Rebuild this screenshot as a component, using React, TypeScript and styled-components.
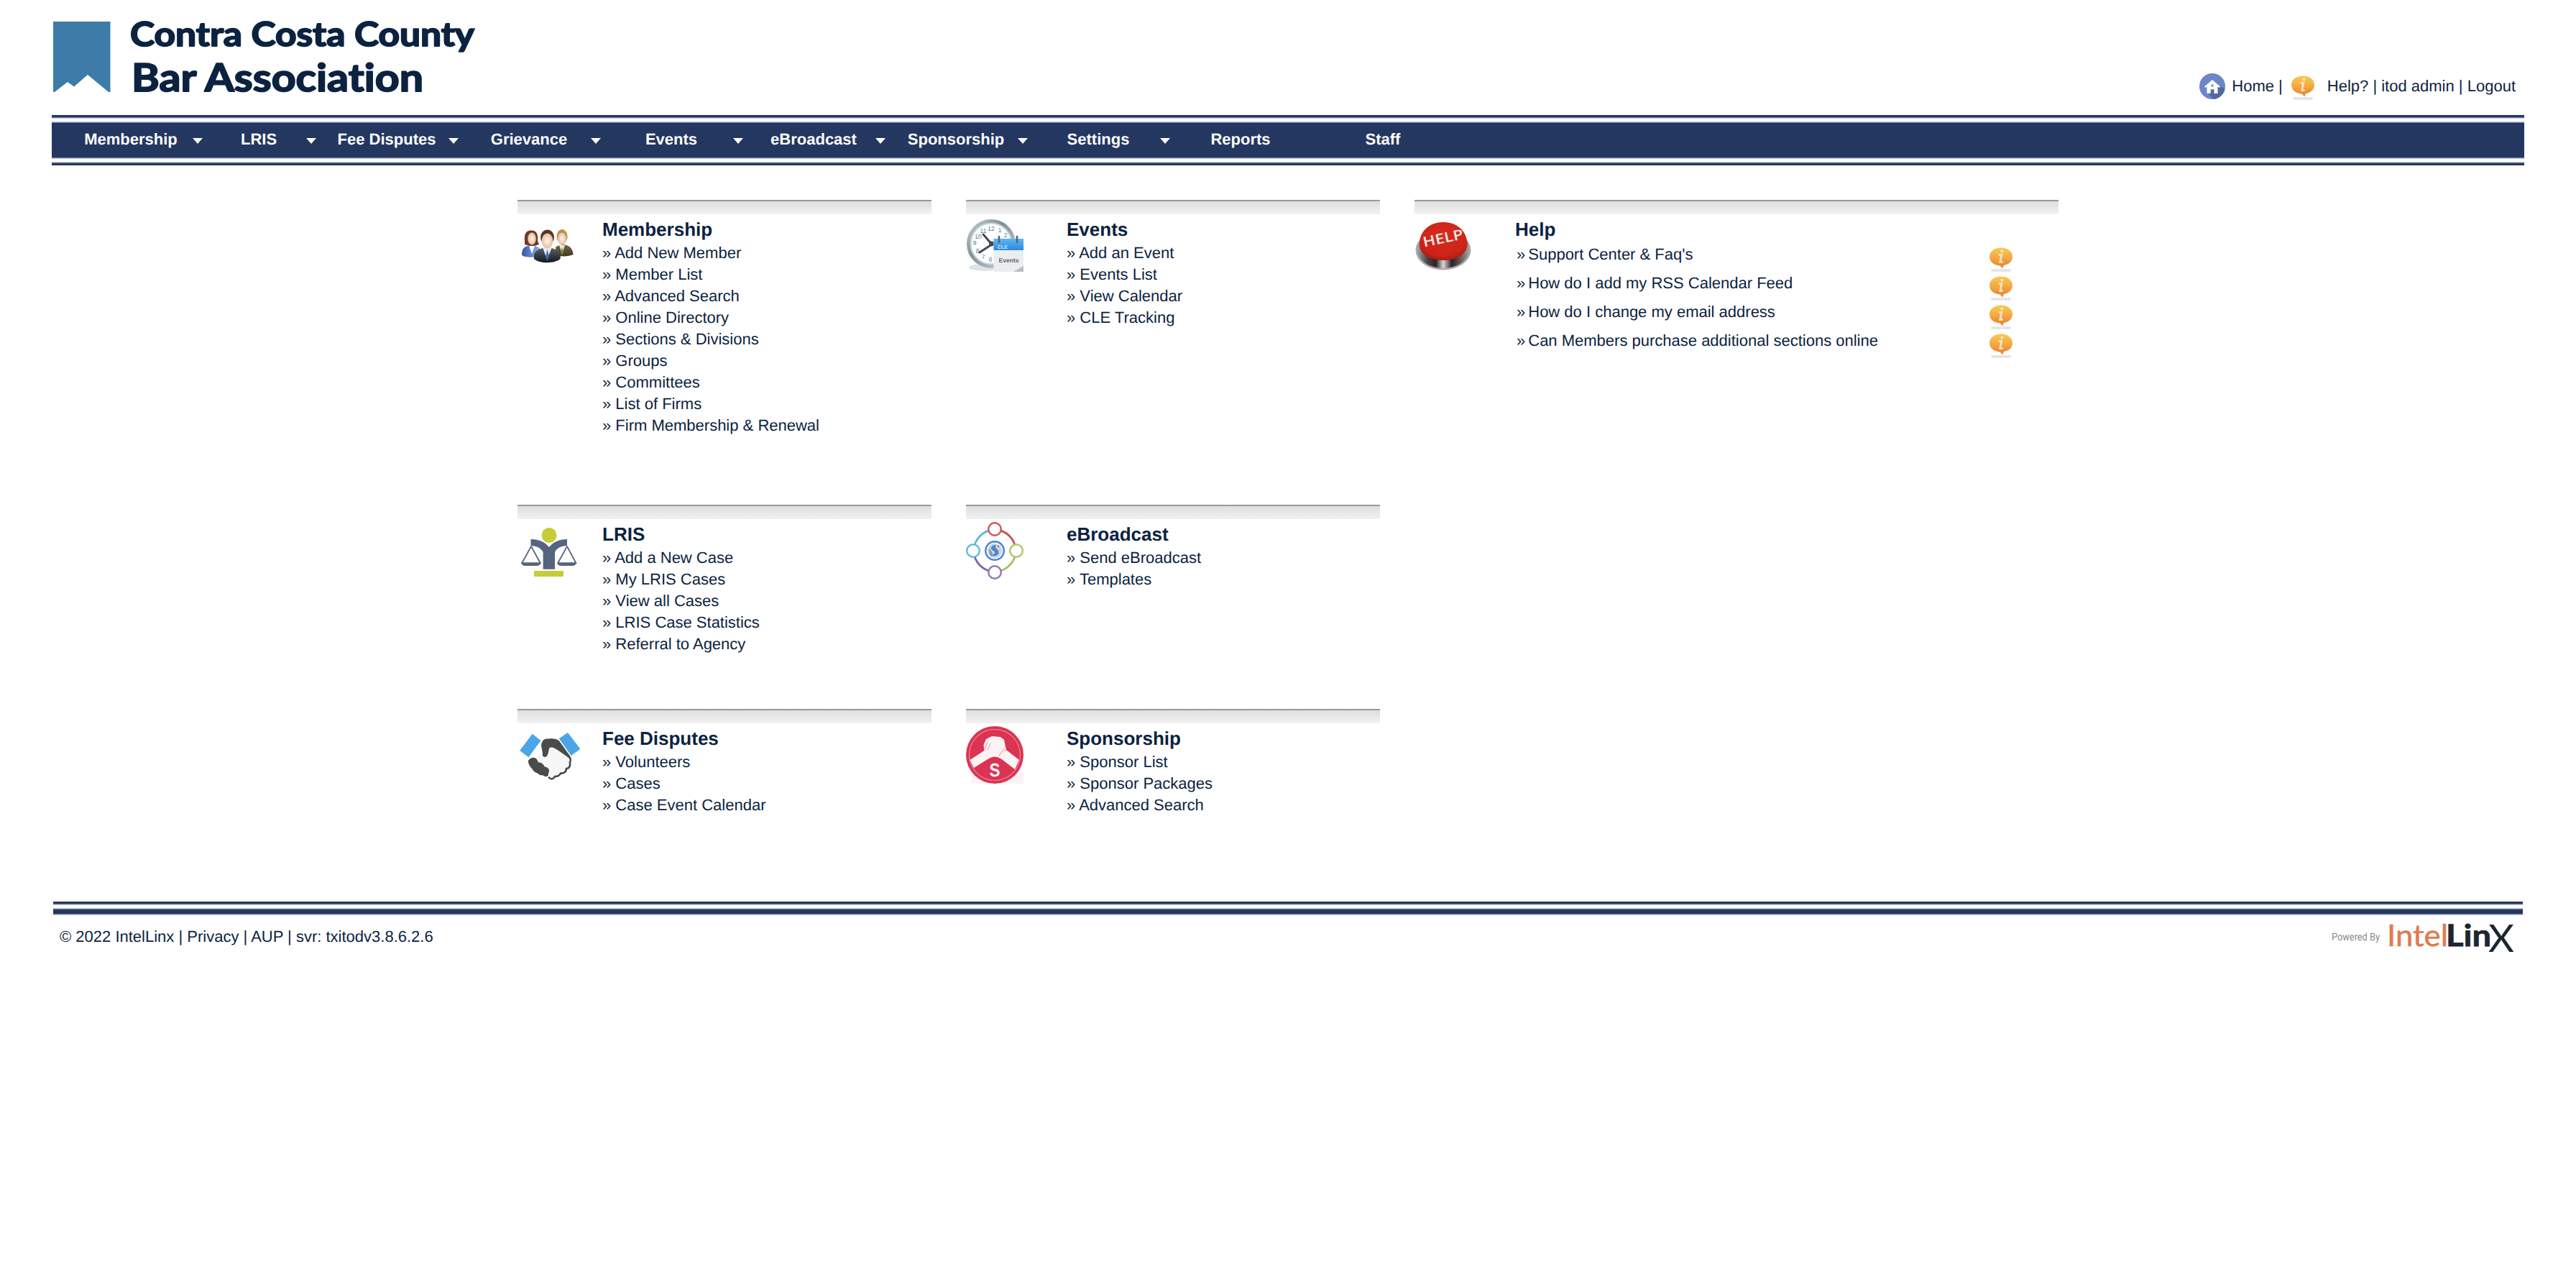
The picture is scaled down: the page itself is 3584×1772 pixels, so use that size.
import React from 'react';
import styled, { createGlobalStyle } from 'styled-components';

const NAVY = '#233760';
const INK = '#0b2340';

const GlobalStyle = createGlobalStyle`
  html, body { margin: 0; padding: 0; background: #fff; }
  body {
    font-family: "Liberation Sans", Arial, Helvetica, sans-serif;
    font-size: 22px;
    color: ${INK};
    text-rendering: geometricPrecision;
  }
  a { color: inherit; text-decoration: none; }
`;

const Page = styled.div`
  width: 3440px;
  margin: 0 72px;
`;

const Header = styled.header`
  display: flex;
  justify-content: space-between;
  align-items: flex-start;
  height: 160px;
`;

const Brand = styled.svg`
  display: block;
  width: 600px;
  height: 120px;
  margin: 24px 0 0 2px;
  overflow: visible;
  font-variant-ligatures: none;
`;

const UserLinks = styled.div`
  display: flex;
  align-items: center;
  height: 36px;
  padding: 102px 12px 0 0;
  white-space: pre;
`;

const IconSlot = styled.span<{ $left?: number; $right?: number; $top?: number }>`
  display: flex;
  margin-left: ${(p) => p.$left ?? 0}px;
  margin-right: ${(p) => p.$right ?? 0}px;
  margin-top: ${(p) => p.$top ?? 0}px;
`;

const Rule = styled.div<{ $flip?: boolean }>`
  height: 5px;
  background: linear-gradient(
    ${(p) => (p.$flip ? 'to top' : 'to bottom')},
    ${NAVY} 3px, #73829f 3px, #73829f 4px, #c3cbd9 4px
  );
`;

const NavBar = styled.nav`
  display: flex;
  height: 52px;
  margin: 4px 0;
  padding-left: 11px;
  box-sizing: border-box;
  background: linear-gradient(
    to bottom,
    #c3cbd9 1px, #73829f 1px, #73829f 2px, ${NAVY} 2px,
    ${NAVY} 50px, #73829f 50px, #73829f 51px, #c3cbd9 51px
  );
`;

const NavItem = styled.a<{ $width: number }>`
  position: relative;
  width: ${(p) => p.$width}px;
  line-height: 49px;
  text-align: center;
  font-weight: 700;
  color: #fff;
`;

const Caret = styled.i`
  position: absolute;
  right: -1px;
  top: 23px;
  border: 7px solid transparent;
  border-top: 8px solid #fff;
  border-bottom: 0;
`;

const Board = styled.main`
  display: grid;
  grid-template-columns: 576px 576px 896px;
  grid-template-rows: 424px 284px 268px;
  column-gap: 48px;
  padding: 48px 0 0 648px;
`;

const Panel = styled.section`
  &::before {
    content: "";
    display: block;
    height: 18px;
    border-top: 2px solid #999;
    background: linear-gradient(#dedede, #f2f2f2);
  }
`;

const PanelBody = styled.div<{ $iconCell: number }>`
  display: grid;
  grid-template-columns: ${(p) => p.$iconCell}px 1fr;
  padding-top: 4px;
`;

const Picture = styled.svg`
  display: block;
  width: 90px;
  height: 80px;
  overflow: visible;
`;

const Title = styled.h2`
  margin: 2px 0 0;
  font-size: 26px;
  line-height: 30px;
  font-weight: 700;
`;

const Links = styled.ul`
  margin: 3px 0 0;
  padding: 0;
  list-style: none;
  li { line-height: 30px; white-space: nowrap; }
`;

const HelpRow = styled.div`
  display: flex;
  justify-content: space-between;
  align-items: flex-start;
  height: 40px;
  padding: 0 63px 0 2px;
  line-height: 27px;
`;

const HelpRows = styled.div`
  padding-top: 6px;
`;

const HelpLink = styled.a`
  margin-left: 4px;
`;

const FooterRules = styled.div`
  margin: 0 2px;
`;

const ThickRule = styled.div`
  height: 10px;
  margin-top: 4px;
  background: linear-gradient(
    #c3cbd9 1px, #73829f 1px, #73829f 2px, ${NAVY} 2px,
    ${NAVY} 8px, #73829f 8px, #73829f 9px, #c3cbd9 9px
  );
`;

const Footer = styled.footer`
  display: flex;
  justify-content: space-between;
  padding: 0 12px 0 11px;
`;

const Legal = styled.div`
  padding-top: 15px;
  line-height: 30px;
`;

const Powered = styled.svg`
  display: block;
  width: 260px;
  height: 54px;
  overflow: visible;
`;

const BrandLogo = () => (
  <Brand viewBox="74 24 600 120">
    <path d="M74 30H153.500V128H151L122 104L103 120.500L94 114L76 128H74Z" fill="#3d7ca8" />
    <g fill="#0b2340" stroke="#0b2340" strokeWidth="1.900" strokeLinejoin="round" fontFamily="Lato, sans-serif" fontWeight={700}>
      <text x="181" y="63.500" fontSize="46.500" textLength="479" lengthAdjust="spacingAndGlyphs">Contra Costa County</text>
      <text x="183" y="126.500" fontSize="53.500" textLength="406" lengthAdjust="spacingAndGlyphs">Bar Association</text>
    </g>
  </Brand>
);

const HomeIcon = () => (
  <svg width="36" height="36" viewBox="0 0 36 36">
    <circle cx="18" cy="18" r="18" fill="#6b87c9" />
    <path d="M28 17L35.500 22A18 18 0 0 1 20 36L12 28Z" fill="#52699f" />
    <path d="M18 9L29 18.500L28 20L25.500 18.500V28H20.500V22H15.500V28H10.500V18.500L8.500 20L7 18.500Z" fill="#fff" />
    <circle cx="18" cy="17" r="1.700" fill="#6b87c9" />
  </svg>
);

const InfoIcon = () => (
  <svg width="34" height="34" viewBox="0 0 34 34">
    <defs>
      <linearGradient id="bubble" x1="0" y1="0" x2="0" y2="1">
        <stop offset="0" stopColor="#f6cb55" />
        <stop offset="0.5" stopColor="#f3a843" />
        <stop offset="1" stopColor="#ea7a2e" />
      </linearGradient>
    </defs>
    <rect x="3" y="30" width="28" height="4" rx="2" fill="#e6e6e6" />
    <path d="M17 0.500C26.500 0.500 33 6 33 13C33 19.500 28 24 20.500 25.300L19.500 29.500L15.500 25.500C7 25 1 20 1 13C1 6 7.500 0.500 17 0.500Z" fill="url(#bubble)" />
    <g fill="none" stroke="#fbe3bd" strokeWidth="2.800" strokeLinecap="round">
      <path d="M18.300 5.500V5.700" strokeWidth="3.800" />
      <path d="M15 10.500H17.800L15.800 20.500H18.500" />
    </g>
  </svg>
);

const PeopleIcon = () => (
  <Picture viewBox="0 0 90 80">
    <defs>
      <linearGradient id="womanSuit" x1="0" x2="1"><stop offset="0" stopColor="#3557a8" /><stop offset="1" stopColor="#8fb2e8" /></linearGradient>
      <linearGradient id="manSuit" x1="0" y1="0" x2="0" y2="1"><stop offset="0" stopColor="#5a6068" /><stop offset="1" stopColor="#14181e" /></linearGradient>
      <linearGradient id="oliveSuit" x1="0" y1="0" x2="0" y2="1"><stop offset="0" stopColor="#77694a" /><stop offset="1" stopColor="#3e3721" /></linearGradient>
      <radialGradient id="skin"><stop offset="0" stopColor="#fff6ee" /><stop offset="1" stopColor="#e9bd9a" /></radialGradient>
    </defs>
    <path d="M10 33C9 23 12 18.500 19 18.500C26 18.500 29 23 28 33L30 38L20 41L10 38Z" fill="#6a3a2a" />
    <path d="M6 53C6 44 9 41 16 39.500L20 42L24 39.500L31 43V54C22 57 10 56 6 53Z" fill="url(#womanSuit)" />
    <path d="M16 40L20 51L24 40Z" fill="#fff" />
    <ellipse cx="20" cy="30" rx="5.800" ry="8.500" fill="url(#skin)" />
    <path d="M53 42C56 39 60 39 63 38C72 39 77 43 77.500 52C72 55 60 55 54 53Z" fill="url(#oliveSuit)" />
    <path d="M58 39L62 51L66 39Z" fill="#e9eadc" /><path d="M62 42L64 49L62 53L60 49Z" fill="#71863f" />
    <ellipse cx="62" cy="27" rx="7.500" ry="10" fill="#b89048" />
    <ellipse cx="62" cy="30" rx="6" ry="8.500" fill="url(#skin)" />
    <path d="M23 58C22 48 27 45 36 43H47C56 45 61 49 59.500 58C52 65 30 65 23 58Z" fill="url(#manSuit)" />
    <path d="M35 42L41 59L48 42Z" fill="#e4ecf7" /><path d="M41.500 45L44 55L41.500 61L39 55Z" fill="#3d67b5" />
    <ellipse cx="41.500" cy="28" rx="9.500" ry="10.500" fill="#553728" />
    <ellipse cx="41.500" cy="33" rx="7.800" ry="10.500" fill="url(#skin)" />
  </Picture>
);

const NUMERALS: [string, number, number][] = [
  ['12', 35, 19], ['1', 47, 21], ['2', 55, 28], ['11', 24, 22], ['10', 17, 30],
  ['9', 12, 39], ['8', 16, 50], ['7', 24, 58], ['6', 34, 62],
];

const ClockIcon = () => (
  <Picture viewBox="0 0 90 80">
    <defs>
      <linearGradient id="rim" x1="0" y1="0" x2="1" y2="1"><stop offset="0" stopColor="#c9ced1" /><stop offset="0.4" stopColor="#858b90" /><stop offset="1" stopColor="#d6dadc" /></linearGradient>
      <linearGradient id="calHead" x1="0" y1="0" x2="0" y2="1"><stop offset="0" stopColor="#5cb8f5" /><stop offset="1" stopColor="#2f87dc" /></linearGradient>
    </defs>
    <ellipse cx="26" cy="70" rx="22" ry="5" fill="#dde4e7" />
    <circle cx="35" cy="37" r="31.500" fill="#fbfdfe" stroke="url(#rim)" strokeWidth="5" />
    <circle cx="35" cy="37" r="28.500" fill="none" stroke="#b7d6e6" strokeWidth="2" />
    <g fontSize="8.500" fill="#6f767b" textAnchor="middle">
      {NUMERALS.map(([n, x, y]) => <text key={n} x={x} y={y}>{n}</text>)}
    </g>
    <path d="M24 24L36 38L19 49" fill="none" stroke="#44494d" strokeWidth="3" strokeLinecap="round" />
    <circle cx="35.500" cy="37" r="3.500" fill="#44494d" />
    <rect x="38.500" y="30" width="41.500" height="46" fill="#ebedee" />
    <rect x="38.500" y="30" width="41.500" height="16" fill="url(#calHead)" />
    <path d="M66 76L80 68V76Z" fill="#b9bdbf" />
    <path d="M46 27V35M71 27V35" stroke="#56626b" strokeWidth="2.600" strokeLinecap="round" />
    <text x="44" y="43.500" fontSize="7" fontWeight="700" fill="#cbe8fb">CLE</text>
    <text x="59.500" y="62.500" fontSize="8.500" fontWeight="700" fill="#60666c" textAnchor="middle">Events</text>
  </Picture>
);

const HelpIcon = () => (
  <Picture viewBox="0 0 90 80">
    <defs>
      <radialGradient id="dome" cx="0.5" cy="0.35" r="0.7"><stop offset="0" stopColor="#d82c1d" /><stop offset="0.75" stopColor="#cb2418" /><stop offset="1" stopColor="#a4170f" /></radialGradient>
      <linearGradient id="chrome" x1="0" x2="1"><stop offset="0" stopColor="#aaa4a4" /><stop offset="0.2" stopColor="#4b4343" /><stop offset="0.36" stopColor="#2b2424" /><stop offset="0.5" stopColor="#dcd8d8" /><stop offset="0.66" stopColor="#2a2323" /><stop offset="0.85" stopColor="#6b6262" /><stop offset="1" stopColor="#aaa4a4" /></linearGradient>
    </defs>
    <ellipse cx="40" cy="46" rx="38.500" ry="27.500" fill="#b0abab" />
    <ellipse cx="40" cy="45" rx="36.500" ry="26" fill="url(#chrome)" />
    <path d="M7 36C8 18 22 7 40 7C58 7 72 18 73.500 36C74 51 59 60 40 60C21 60 6 51 7 36Z" fill="url(#dome)" />
    <text x="40" y="36" transform="rotate(-12 40 31)" textAnchor="middle" fontFamily="Open Sans, sans-serif" fontWeight="600" fontSize="19.500" textLength="57" lengthAdjust="spacingAndGlyphs" fill="#fbe9e5">HELP</text>
  </Picture>
);

const ScalesIcon = () => (
  <Picture viewBox="0 0 90 80">
    <circle cx="44" cy="18.500" r="10.500" fill="#c5cd3a" />
    <path d="M18.500 24C31 24 38 28 44 35C50 28 57 24 69 24V33C60 33.500 54 37 52 42V65.700H35.600V42C33 37 28 33.500 18.500 33Z" fill="#56657f" />
    <path d="M19 34L6 57.500H32ZM69 34L56 57.500H81.500Z" fill="#fff" stroke="#56657f" strokeWidth="1.800" strokeLinejoin="round" />
    <path d="M5 56.500H32.500Q31 61 27 61H10.500Q6.500 61 5 56.500ZM55 56.500H82Q80.500 61 76.500 61H60.500Q56.500 61 55 56.500Z" fill="#56657f" />
    <rect x="23" y="68" width="41" height="8" rx="1" fill="#c5cd3a" />
  </Picture>
);

const BroadcastIcon = () => (
  <Picture viewBox="0 0 90 80">
    <g fill="none" strokeWidth="2.800">
      <path d="M11 40A29 29 0 0 1 40 11" stroke="#5fb8d6" />
      <path d="M40 11A29 29 0 0 1 69 40" stroke="#bf5350" />
      <path d="M69 40A29 29 0 0 1 40 69" stroke="#a3c455" />
      <path d="M40 69A29 29 0 0 1 11 40" stroke="#8063a8" />
    </g>
    <g fill="#fff" strokeWidth="2.400">
      <circle cx="40" cy="10" r="8.800" stroke="#c8595b" />
      <circle cx="10" cy="40" r="8.800" stroke="#62bcd8" />
      <circle cx="70" cy="40" r="8.800" stroke="#abc968" />
      <circle cx="40" cy="70" r="8.800" stroke="#9676bd" />
    </g>
    <circle cx="40" cy="40" r="12.800" fill="#eef4fb" stroke="#4e83d0" strokeWidth="2.400" />
    <circle cx="40" cy="40" r="9.800" fill="#c4d6e6" />
    <path d="M42 32C34 32 33 38 38 40C42 42 40 45 35 46.500C41 49 47 46 45 40C43 37 39 36 42 32Z" fill="#4f86c4" />
    <path d="M33 37C31 42 33 46 36 48L37 44Z" fill="#8396a8" />
    <circle cx="45" cy="34" r="1.400" fill="#e25c78" />
  </Picture>
);

const HandshakeIcon = () => (
  <Picture viewBox="0 0 90 80">
    <path d="M20.600 10.700L32.400 20L15.400 43.300L3.200 34Z" fill="#4aa6e8" />
    <path d="M70 9L87.400 31.700L74.700 41L57.700 17.300Z" fill="#4aa6e8" />
    <path d="M41 30L52 30L73 48L70 60L48 73L43 62L25 45Z" fill="#f6f6f6" />
    <path d="M33 27C34 19 38 17 43 17.500C49 17 55 17.500 58 20.500L73.500 42C76 46 75 49 73 53L71.500 51.500C73 48 73 46 71 44L57 34C51 30 47 28 44 31C43 35 43 40 40 42.500C37 44 34 42 35 38Z" fill="#4b4b4b" />
    <path d="M73 50C74 55 72 59 68 59C68 64 64 66 60 65.500C58 70 54 70 52 70C50 74 46 74 44 71.500" fill="none" stroke="#4b4b4b" strokeWidth="2.600" strokeLinecap="round" />
    <path d="M15.500 48C17 45 22 43 26 45.500L29 51C33 50.500 36 53 37.500 57C41 57 43.500 59 43.500 62L42 69C39 70.500 37 69 35.500 68C32 68 29 67 28 65C24 64 22 62 21 59.500C18 57 15 52 15.500 48Z" fill="#4b4b4b" stroke="#4b4b4b" strokeLinejoin="round" />
  </Picture>
);

const SponsorIcon = () => (
  <Picture viewBox="0 0 90 80">
    <path d="M8 64H80V80H8Z" fill="#fdf3f4" />
    <circle cx="40" cy="40" r="40" fill="#dc3352" />
    <circle cx="40" cy="40" r="35.500" fill="none" stroke="#ec8497" strokeWidth="1.200" />
    <path d="M5.500 47L25.300 34L24.500 26L28 18L36 14L48 15L53 19L56 33L74 47L68 60L49 45.500Q40 39.500 31 45.500L11 58Z" fill="#fdf3f4" />
    <path d="M26 33L30 22M30 33L34 24M46 41L52 33L56 34" fill="none" stroke="#f2b3be" strokeWidth="1.400" strokeLinecap="round" />
    <text x="40" y="69.500" textAnchor="middle" fontWeight="700" fontSize="26" textLength="15" lengthAdjust="spacingAndGlyphs" fill="#fff">S</text>
  </Picture>
);

const NAV: { label: string; width: number; menu: boolean }[] = [
  { label: 'Membership', width: 198, menu: true },
  { label: 'LRIS', width: 158, menu: true },
  { label: 'Fee Disputes', width: 198, menu: true },
  { label: 'Grievance', width: 198, menu: true },
  { label: 'Events', width: 198, menu: true },
  { label: 'eBroadcast', width: 198, menu: true },
  { label: 'Sponsorship', width: 198, menu: true },
  { label: 'Settings', width: 198, menu: true },
  { label: 'Reports', width: 198, menu: false },
  { label: 'Staff', width: 198, menu: false },
];

interface LinkPanelProps {
  title: string;
  icon: React.ReactNode;
  iconCell: number;
  links: string[];
}

const LinkPanel = ({ title, icon, iconCell, links }: LinkPanelProps) => (
  <Panel>
    <PanelBody $iconCell={iconCell}>
      {icon}
      <div>
        <Title>{title}</Title>
        <Links>
          {links.map((l) => (
            <li key={l}>» <a href="#">{l}</a></li>
          ))}
        </Links>
      </div>
    </PanelBody>
  </Panel>
);

const HELP_TOPICS = [
  "Support Center & Faq's",
  'How do I add my RSS Calendar Feed',
  'How do I change my email address',
  'Can Members purchase additional sections online',
];

export default function App() {
  return (
    <>
      <GlobalStyle />
      <Page>
        <Header>
          <BrandLogo />
          <UserLinks>
            <IconSlot $right={9}><HomeIcon /></IconSlot>
            <span><a href="#">Home</a> |</span>
            <IconSlot $left={11} $right={17} $top={3}><InfoIcon /></IconSlot>
            <span><a href="#">Help?</a> | <a href="#">itod admin</a> | <a href="#">Logout</a></span>
          </UserLinks>
        </Header>
        <Rule />
        <NavBar>
          {NAV.map((n) => (
            <NavItem key={n.label} href="#" $width={n.width}>
              {n.label}
              {n.menu && <Caret />}
            </NavItem>
          ))}
        </NavBar>
        <Rule $flip />
        <Board>
          <LinkPanel
            title="Membership"
            icon={<PeopleIcon />}
            iconCell={118}
            links={['Add New Member', 'Member List', 'Advanced Search', 'Online Directory', 'Sections & Divisions', 'Groups', 'Committees', 'List of Firms', 'Firm Membership & Renewal']}
          />
          <LinkPanel
            title="Events"
            icon={<ClockIcon />}
            iconCell={140}
            links={['Add an Event', 'Events List', 'View Calendar', 'CLE Tracking']}
          />
          <Panel>
            <PanelBody $iconCell={140}>
              <HelpIcon />
              <div>
                <Title>Help</Title>
                <HelpRows>
                  {HELP_TOPICS.map((t) => (
                    <HelpRow key={t}>
                      <span>»<HelpLink href="#">{t}</HelpLink></span>
                      <IconSlot $top={4}><InfoIcon /></IconSlot>
                    </HelpRow>
                  ))}
                </HelpRows>
              </div>
            </PanelBody>
          </Panel>
          <LinkPanel
            title="LRIS"
            icon={<ScalesIcon />}
            iconCell={118}
            links={['Add a New Case', 'My LRIS Cases', 'View all Cases', 'LRIS Case Statistics', 'Referral to Agency']}
          />
          <LinkPanel title="eBroadcast" icon={<BroadcastIcon />} iconCell={140} links={['Send eBroadcast', 'Templates']} />
          <span />
          <LinkPanel title="Fee Disputes" icon={<HandshakeIcon />} iconCell={118} links={['Volunteers', 'Cases', 'Case Event Calendar']} />
          <LinkPanel title="Sponsorship" icon={<SponsorIcon />} iconCell={140} links={['Sponsor List', 'Sponsor Packages', 'Advanced Search']} />
        </Board>
        <FooterRules>
          <Rule />
          <ThickRule />
        </FooterRules>
        <Footer>
          <Legal>
            © 2022 IntelLinx | <a href="#">Privacy</a> | <a href="#">AUP</a> | svr: txitodv3.8.6.2.6
          </Legal>
          <Powered viewBox="3240 1273 260 54">
            <text x="3244" y="1308" fontFamily="Roboto, sans-serif" fontSize="14.500" textLength="67" lengthAdjust="spacingAndGlyphs" fill="#888">Powered By</text>
            <g fontFamily="Lato, sans-serif">
              <text x="3321" y="1316" fontSize="42" textLength="85" lengthAdjust="spacingAndGlyphs" fill="#e07a50" stroke="#e07a50" strokeWidth="0.500">Intel</text>
              <text x="3403" y="1316" fontSize="42" fontWeight="700" textLength="63" lengthAdjust="spacingAndGlyphs" fill="#1c2630" stroke="#1c2630" strokeWidth="0.800">Lin</text>
              <text x="3462" y="1324" fontSize="53" fontWeight="400" textLength="36" lengthAdjust="spacingAndGlyphs" fill="#1c2630">X</text>
            </g>
          </Powered>
        </Footer>
      </Page>
    </>
  );
}
